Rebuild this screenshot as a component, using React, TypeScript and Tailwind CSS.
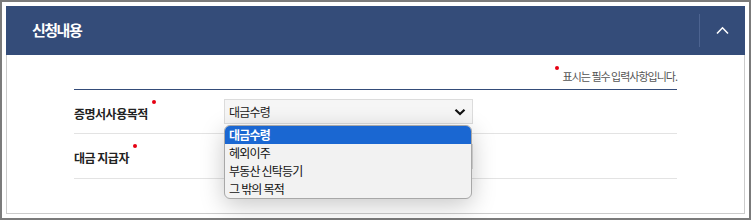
import { useState } from 'react';

const options = ['대금수령', '헤외이주', '부동산 신탁등기', '그 밖의 목적'];

function RequiredDot() {
  return <span className="absolute -right-[8px] -top-[5px] w-[4px] h-[4px] rounded-full bg-[#e60012]" />;
}

export default function App() {
  const [selected] = useState(0);

  return (
    <div className="w-[751px] h-[220px] border-2 border-[#7b7b7b] p-[4px] bg-white font-['Noto_Sans_CJK_KR',sans-serif]">
      <div className="flex flex-col h-full">
        {/* header */}
        <div className="h-[49px] shrink-0 bg-[#344c79] flex items-center">
          <h2 className="pl-[26px] text-[15px] font-bold text-white tracking-[-1.5px] flex-1">신청내용</h2>
          <div className="w-px self-stretch my-[8px] bg-[#4c6390]" />
          <div className="w-[45px] flex justify-center">
            <svg width="13" height="9" viewBox="0 0 13 9" fill="none">
              <path d="M1 7.5L6.5 1.8L12 7.5" stroke="white" strokeWidth="1.6" />
            </svg>
          </div>
        </div>

        {/* body */}
        <div className="flex-1 border-x border-b border-[#cccccc] px-[67px]">
          <div className="h-[35px] border-b border-[#344c79] flex justify-end pt-[14px]">
            <p className="relative text-[11px] leading-[14px] text-[#555] tracking-[-1px] whitespace-pre">
              <span className="absolute -left-[8px] top-[-3px] w-[4px] h-[4px] rounded-full bg-[#e60012]" />
              표시는 필수 입력사항입니다.
            </p>
          </div>

          <div className="h-[44px] border-b border-[#e3e3e3] flex items-center">
            <div className="w-[150px]">
              <span className="relative text-[12px] font-bold text-[#222] tracking-[-0.5px]">
                증명서사용목적
                <RequiredDot />
              </span>
            </div>
            <div className="relative">
              <div className="w-[249px] h-[25px] bg-[#f6f6f6] border border-[#dcdcdc] flex items-center justify-between pl-[4px] pr-[6px]">
                <span className="text-[12px] text-[#222] tracking-[-0.8px]">{options[selected]}</span>
                <svg width="12" height="8" viewBox="0 0 12 8" fill="none">
                  <path d="M1.5 1.8L6 6L10.5 1.8" stroke="#111" strokeWidth="2.2" />
                </svg>
              </div>

              {/* open list */}
              <ul className="absolute left-0 top-[26px] z-10 w-[248px] rounded-[6px] border border-[#a8a8a8] bg-[#f2f2f2] overflow-hidden shadow-[0_6px_24px_rgba(0,0,0,0.22)]">
                {options.map((o, i) => (
                  <li
                    key={o}
                    className={
                      i === selected
                        ? 'h-[18px] leading-[18px] pl-[4px] text-[12px] font-bold text-white bg-[#1a67d2] tracking-[-0.8px] whitespace-pre'
                        : 'h-[18px] leading-[18px] pl-[4px] text-[12px] text-[#111] tracking-[-0.8px] whitespace-pre'
                    }
                  >
                    {o}
                  </li>
                ))}
              </ul>
            </div>
          </div>

          <div className="h-[45px] border-b border-[#e3e3e3] flex items-center">
            <div className="w-[150px]">
              <span className="relative text-[12px] font-bold text-[#222] tracking-[-0.5px] whitespace-pre">
                대금 지급자
                <RequiredDot />
              </span>
            </div>
            <div className="w-[249px] h-[25px] bg-[#f6f6f6] border border-[#dcdcdc]" />
          </div>
        </div>
      </div>
    </div>
  );
}
